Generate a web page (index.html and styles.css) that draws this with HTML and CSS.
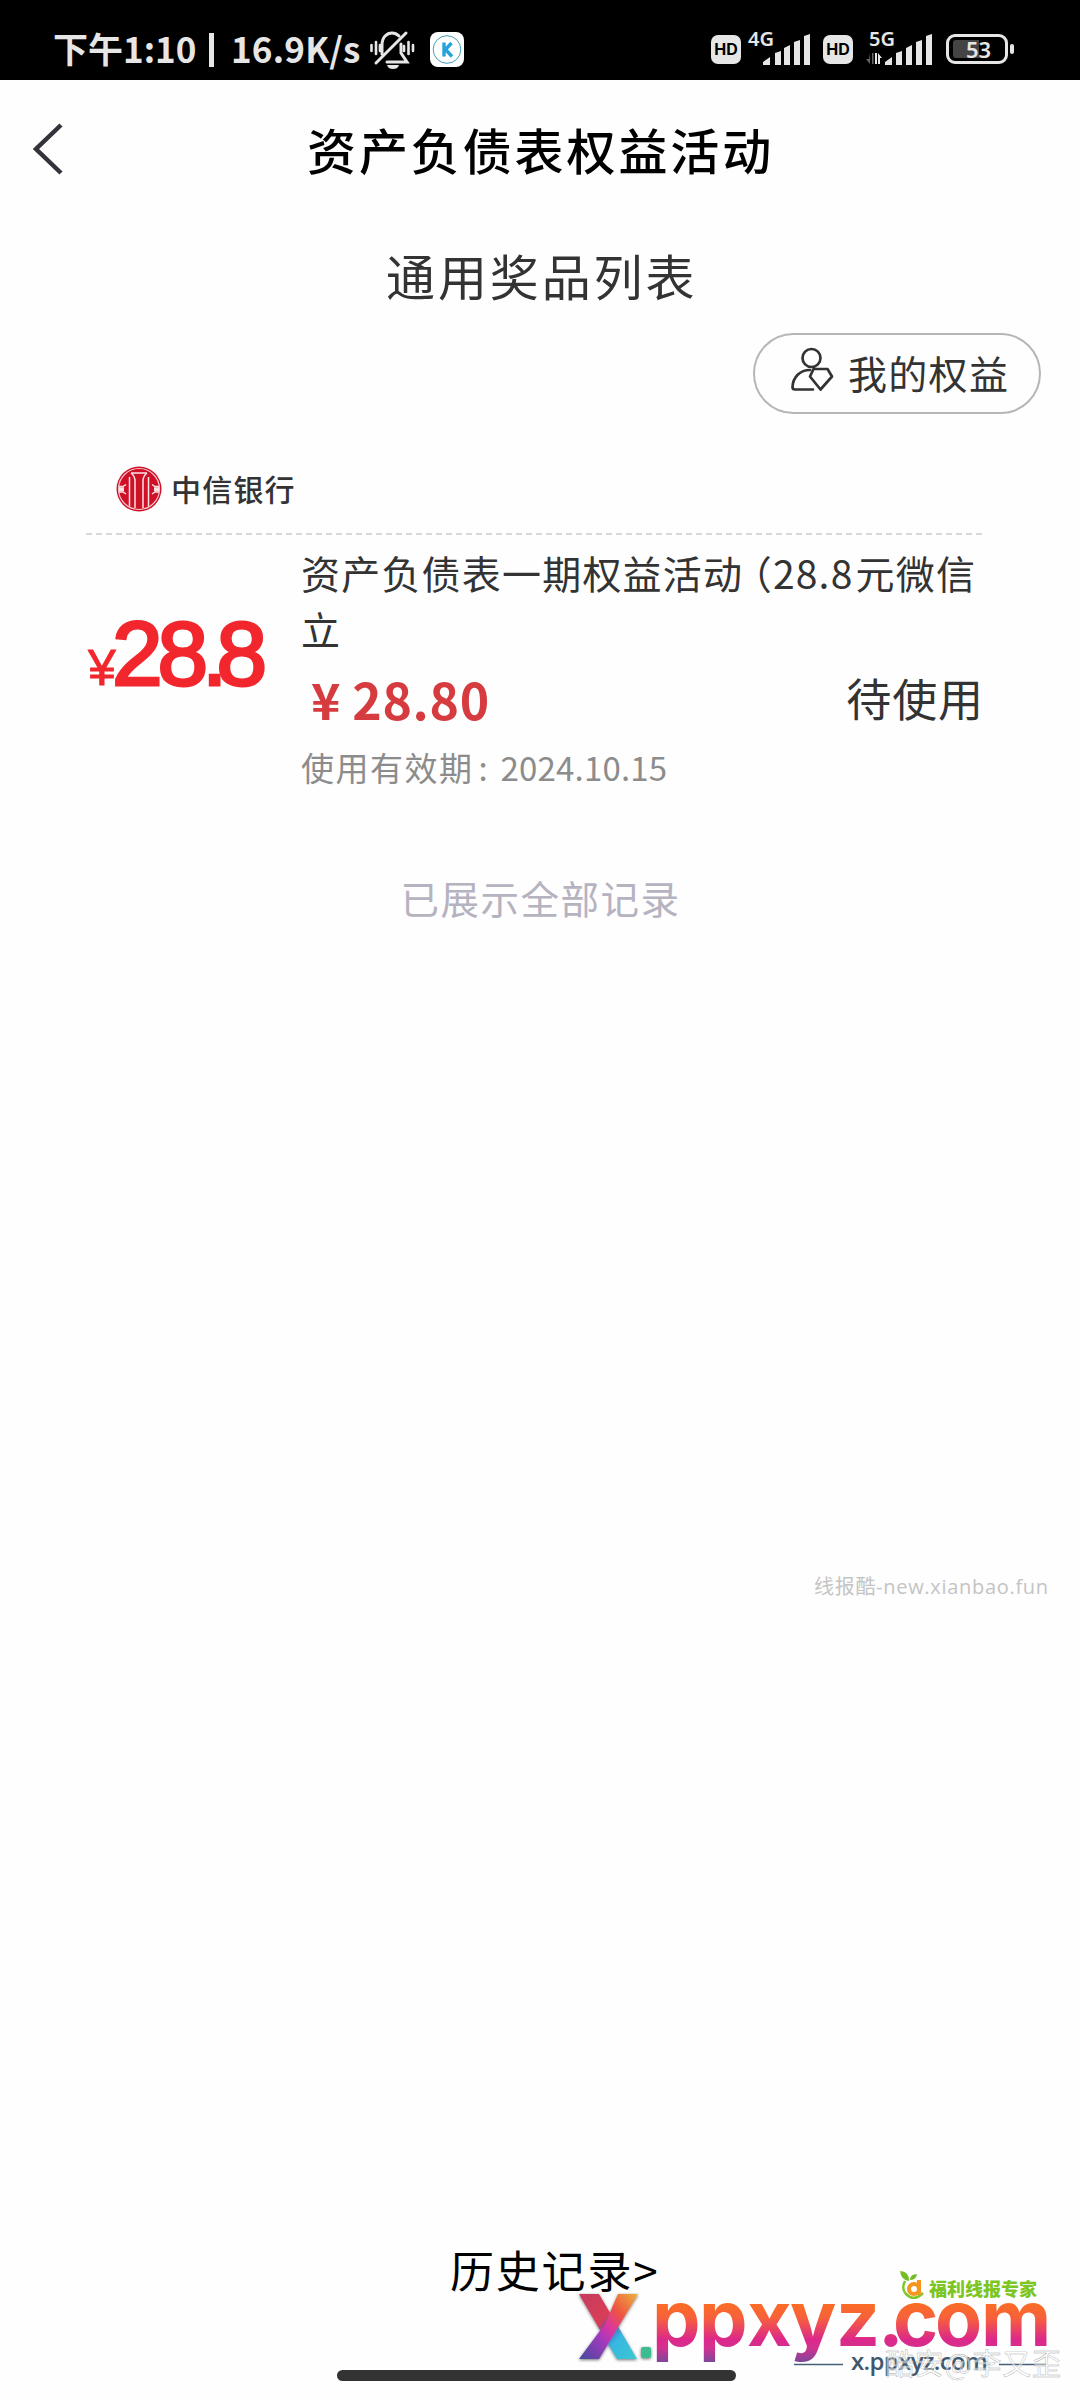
FILE: index.html
```html
<!DOCTYPE html>
<html lang="zh-CN">
<head>
<meta charset="utf-8">
<title>资产负债表权益活动</title>
<link rel="stylesheet" href="styles.css">
</head>
<body>
<div class="screen">
  <header class="status">
    <span class="clock">下午1:10</span><span class="divider"></span><span class="speed">16.9K/s</span>
    <svg class="bell" width="46" height="40" viewBox="0 0 46 40" fill="none" stroke="#e6e6e6" stroke-width="3" stroke-linecap="round">
      <path d="M1.500 15v6M6 12v12M10 15v6M34 16v5M38.500 12v12M43 15v6" stroke-width="2.600"/>
      <path d="M12 24V15C12 7 17 3 22 3c3 0 5 1 7 3M31 14v9l6 9H17"/>
      <path d="M36 3 6 33"/>
      <path d="M17 35h12c-1 3-3 4-6 4s-5-1-6-4z" fill="#e6e6e6" stroke="none"/>
    </svg>
    <svg class="kapp" width="34" height="35" viewBox="0 0 34 35">
      <rect width="34" height="35" rx="8" fill="#fff"/>
      <circle cx="17" cy="17.500" r="13.800" fill="none" stroke="#3e9cbb" stroke-width="1"/>
      <path d="M14 10.500v14M21.500 11l-6 6.500 6.500 7" fill="none" stroke="#26a3da" stroke-width="3.400"/>
    </svg>
    <span class="hd">HD</span>
    <svg class="sig" width="64" height="38" viewBox="0 0 64 38" fill="#e6e6e6">
      <text x="0" y="17" class="net">4G</text>
      <path d="M15 36v-3l7-5v8zM27 36V24l6-2v14zM36 36V19l6-3v20zM46 36V13l6-2v25zM56 36V7l6-2v31z"/>
    </svg>
    <span class="hd hd2">HD</span>
    <svg class="sig2" width="66" height="38" viewBox="0 0 66 38" fill="#e6e6e6">
      <text x="3" y="17" class="net">5G</text>
      <path d="M4 24v11l-4-5h3zM6 24h1.500v11H6z" fill="#666"/>
      <path d="M9 24h2v11H9zM12 24l4 5h-2v6h-2z"/>
      <path d="M19 36v-3l7-5v8zM30 36V24l6-2v14zM40 36V19l6-3v20zM50 36V13l6-2v25zM60 36V7l6-2v31z"/>
    </svg>
    <span class="battery"><span class="level"></span><b>53</b></span><span class="nub"></span>
  </header>

  <nav class="nav">
    <svg class="back" width="32" height="54" viewBox="0 0 32 54" fill="none" stroke="#33333b" stroke-width="4.500"><path d="M29 3 4 27l25 24"/></svg>
    <h1>资产负债表权益活动</h1>
  </nav>

  <main>
    <h2>通用奖品列表</h2>
    <div class="actions">
      <a class="mine">
        <svg width="44" height="46" viewBox="0 0 44 46" fill="none" stroke="#333" stroke-width="2.700" stroke-linejoin="round" stroke-linecap="round">
          <circle cx="21.500" cy="12" r="9"/>
          <path d="M20 24C10 24 3 31 2.500 41q0 2.500 2.500 2.500h18"/>
          <path d="M23.500 23h14l4.500 7.500-11.500 13L20 30.500z"/>
        </svg>
        <span>我的权益</span>
      </a>
    </div>

    <section class="card">
      <div class="bank">
        <svg width="46" height="46" viewBox="0 0 46 46">
          <circle cx="23" cy="23" r="22.500" fill="#cf1026"/>
          <circle cx="23" cy="23" r="20.500" fill="none" stroke="#f6c6cb" stroke-width="1.200"/>
          <g fill="none" stroke="#fbe3e5" stroke-width="1.500">
            <path d="M15 7q4 3 4 8v27M31 7q-4 3-4 8v27M15 7h16"/>
            <path d="M13.500 11v29.500M32.500 11v29.500"/>
            <path d="M3 20.500h4l3-2M43 20.500h-4l-3-2M3 26h4l3 2M43 26h-4l-3 2"/>
            <path d="M3 23.200h5M38 23.200h5" stroke-width="4"/>
          </g>
        </svg>
        <span>中信银行</span>
      </div>
      <svg class="dash" width="898" height="2" viewBox="0 0 898 2"><path d="M0 1h898" stroke="#d8d8d8" stroke-width="2" stroke-dasharray="6 4"/></svg>
      <div class="item">
        <svg class="thumb" width="180" height="80" viewBox="0 0 180 80">
          <text class="yen" x="0" y="71">¥</text>
          <text class="amt" x="24 69.500 114 128.500" y="71">28.8</text>
        </svg>
        <div class="info">
          <p class="name">资产负债表一期权益活动<span class="paren">（</span><span class="num">28.8</span>元微信立</p>
          <div class="row"><span class="price"><i>¥</i>28.80</span><span class="state">待使用</span></div>
          <p class="valid">使用有效期<span class="colon">:</span><span class="date">2024.10.15</span></p>
        </div>
      </div>
    </section>
    <p class="end">已展示全部记录</p>
  </main>

  <p class="site">线报酷-new.xianbao.fun</p>

  <footer class="footer">
    <a class="history">历史记录&gt;</a>
    <div class="home"></div>
  </footer>

  <svg class="brand" width="520" height="140" viewBox="560 2260 520 140">
    <defs>
      <linearGradient id="sunset" gradientUnits="userSpaceOnUse" x1="0" y1="2303" x2="0" y2="2362">
        <stop offset="0" stop-color="#fb6d24"/><stop offset=".25" stop-color="#f7613a"/>
        <stop offset=".62" stop-color="#dc288a"/><stop offset=".75" stop-color="#d5308e"/><stop offset="1" stop-color="#7e479b"/>
      </linearGradient>
      <linearGradient id="xa" x1="0" y1="0" x2="1" y2="1">
        <stop offset="0" stop-color="#c53b60"/><stop offset=".4" stop-color="#d93d55"/><stop offset=".52" stop-color="#594fb0"/>
        <stop offset=".68" stop-color="#37b6e2"/><stop offset="1" stop-color="#3cc9cf"/>
      </linearGradient>
      <linearGradient id="xb" x1="1" y1="0" x2="0" y2="1">
        <stop offset="0" stop-color="#edb33f"/><stop offset=".3" stop-color="#ee5540"/><stop offset=".5" stop-color="#dc35a0"/>
        <stop offset=".65" stop-color="#a439bd"/><stop offset="1" stop-color="#424a9c"/>
      </linearGradient>
      <filter id="soft" x="-20%" y="-20%" width="140%" height="140%"><feDropShadow dx="0" dy="1" stdDeviation="1.500" flood-color="#222" flood-opacity=".65"/></filter>
    </defs>
    <g filter="url(#soft)">
      <path d="M579 2294h20l38 65h-20z" fill="url(#xa)"/>
      <path d="M618 2294h20l-39 65h-20l26-35z" fill="url(#xb)"/>
      <rect x="641" y="2347" width="10" height="11" rx="2" fill="#3bbd91"/>
    </g>
    <text class="big" x="652 699 747 790 836 878 893 935 981" y="2346" fill="url(#sunset)">ppxyz.com</text>
    <g fill="none">
      <path d="M905 2281q-4 8 1 13 8 8 17-1" stroke="#80c62c" stroke-width="2.500"/>
      <path d="M900 2271q9 0 9 10-8-1-9-10zM910 2280q0-6 7-6-1 6-7 6z" fill="#75bd24"/>
      <circle cx="914" cy="2289" r="5" stroke="#f6961e" stroke-width="4"/>
      <path d="M919 2280v15" stroke="#f6961e" stroke-width="4"/>
    </g>
    <text class="expert" x="929" y="2296" textLength="108">福利线报专家</text>
    <path d="M794 2364.500h49M999 2364.500h47" stroke="#46607a" stroke-width="1.500"/>
    <text class="small" x="851" y="2370" textLength="137">x.ppxyz.com</text>
    <text class="sign" x="885" y="2375" textLength="176">酷安@李又歪</text>
  </svg>
</div>
</body>
</html>
```
FILE: styles.css
```css
* { box-sizing: border-box; }
body { margin: 0; background: #fdfdfd; font-family: "Noto Sans CJK SC", sans-serif; color: #333; }
h1, h2, p { margin: 0; font-weight: 400; }
.screen { position: relative; width: 1080px; height: 2400px; overflow: hidden; display: flex; flex-direction: column; background: #fefefe; }
svg { display: block; flex: none; overflow: visible; }

.status { height: 80px; flex: none; background: #000; color: #e6e6e6; display: flex; padding-left: 53px; white-space: nowrap; }
.clock, .speed { font-size: 35px; line-height: 52px; margin-top: 22px; font-weight: 700; }
.clock { width: 145px; }
.divider { width: 5px; height: 34px; margin: 33px 17px 0 11px; background: #e6e6e6; }
.speed { width: 139px; letter-spacing: .2px; }
.bell { margin-top: 30px; }
.kapp { margin: 32px 0 0 14px; }
.hd { width: 30px; height: 29px; margin: 35px 7px 0 247px; border-radius: 7px; background: #e6e6e6; color: #000; font: 700 16px/29px Inter, sans-serif; text-align: center; }
.hd2 { margin: 35px 13px 0 11px; }
.sig, .sig2 { margin-top: 29px; }
.net { font: 600 20px "Noto Sans", sans-serif; }
.battery { position: relative; width: 62px; height: 30px; margin: 34px 2px 0 14px; border: 3px solid #e6e6e6; border-radius: 9px; text-align: center; padding-left: 3px; }
.battery b { position: relative; font: 600 22px/24px "Noto Sans", sans-serif; display: block; }
.level { position: absolute; left: 4px; top: 3px; width: 26px; height: 18px; background: #444; border-radius: 3px 0 0 3px; }
.nub { width: 4px; height: 10px; margin-top: 44px; border-radius: 2px; background: #e6e6e6; }

.nav { height: 142px; flex: none; display: flex; padding: 42px 0 0 32px; }
.back { margin-right: 243px; }
.nav h1 { color: #000; font-weight: 500; font-size: 49px; line-height: 54px; letter-spacing: 2.900px; }

h2 { font-size: 49px; line-height: 70px; letter-spacing: 2.900px; padding: 18px 0 0 386px; height: 111px; }
.actions { display: flex; justify-content: flex-end; padding-right: 39px; }
.mine { width: 288px; height: 81px; border: 2px solid #b6b6b6; border-radius: 41px; display: flex; padding: 11px 0 0 35px; gap: 14px; }
.mine span { font-size: 39px; line-height: 52px; letter-spacing: 1.300px; }

.card { width: 898px; margin: 52px 0 0 86px; }
.bank { display: flex; height: 67px; padding-left: 30px; gap: 9px; }
.bank span { font-size: 30px; line-height: 44px; font-weight: 500; letter-spacing: 1.200px; }
.item { display: flex; padding-top: 9px; }
.thumb { margin: 70px 0 0 2px; fill: #f2262d; }
.yen { font: 50px "Liberation Sans", sans-serif; stroke: #f2262d; stroke-width: .8px; }
.amt { font: 91px "Liberation Sans", sans-serif; stroke: #f2262d; stroke-width: 3px; }
.info { width: 715px; margin-left: 33px; }
.name { width: 690px; font-size: 39px; line-height: 56px; letter-spacing: 1.200px; word-break: break-all; }
.paren { margin-left: 9px; font-feature-settings: "halt"; }
.num { margin-right: 2px; }
.row { display: flex; justify-content: space-between; width: 683px; height: 79px; padding-top: 13px; }
.price { display: flex; color: #d63c3f; font-size: 50px; line-height: 58px; font-weight: 700; letter-spacing: .7px; }
.price i { font-style: normal; margin: 0 11px 0 10px; }
.state { font-size: 45px; line-height: 58px; letter-spacing: .900px; }
.valid { font-size: 33px; line-height: 50px; letter-spacing: 1.500px; color: #8c8c8c; margin-top: 7px; }
.colon { display: inline-block; width: 27px; padding-left: 5px; }
.date { letter-spacing: .2px; }
.end { text-align: center; font-size: 38.500px; line-height: 56px; letter-spacing: 1.500px; color: #b5b3c0; margin-top: 77px; padding-left: 1px; }
.site { margin: 647px 0 0 814px; white-space: nowrap; font: 20px/30px "Open Sans", "Noto Sans CJK SC", sans-serif; letter-spacing: .7px; color: #c4c4c4; }
.footer { margin-top: auto; height: 161px; flex: none; }
.history { display: block; margin-left: 450px; font-size: 44px; line-height: 60px; letter-spacing: 1.800px; color: #000; }
.home { width: 399px; height: 11px; margin: 71px 0 0 337px; border-radius: 6px; background: #333; }

.brand { position: absolute; left: 560px; top: 2260px; }
.big { font: 700 77px Inter, sans-serif; }
.small { font: 600 24px "Open Sans", sans-serif; fill: #40586d; }
.expert { font: 900 18px "Noto Sans CJK SC", sans-serif; fill: #7cc522; }
.sign { font: 29px "Noto Sans CJK SC", sans-serif; fill: rgba(255,255,255,.5); stroke: #aaa; stroke-width: .4px; }
```
